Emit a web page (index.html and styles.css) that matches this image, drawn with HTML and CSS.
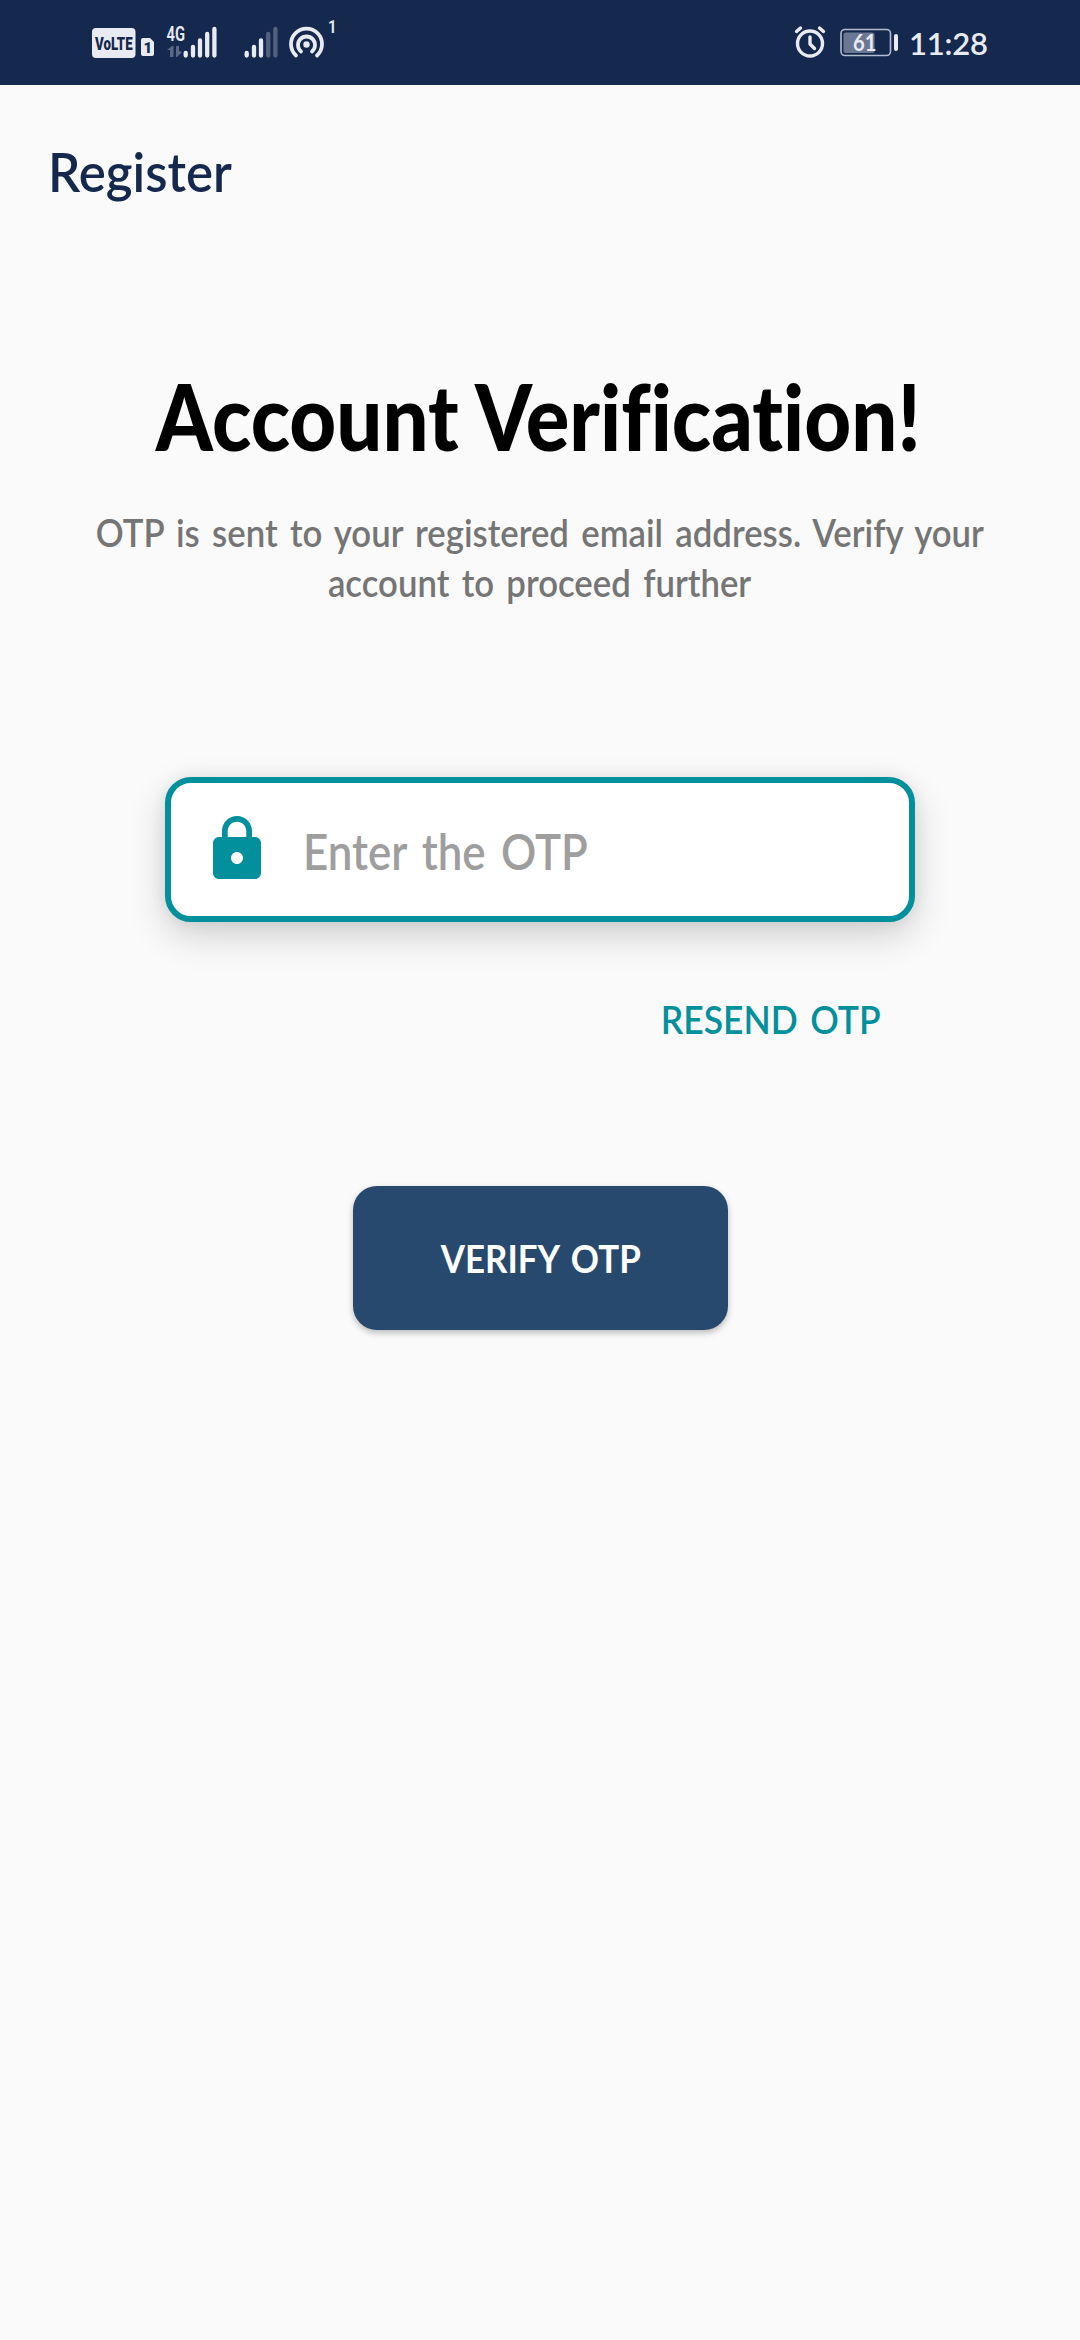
FILE: index.html
```html
<!DOCTYPE html>
<html lang="en">
<head>
<meta charset="utf-8">
<title>Register</title>
<link rel="stylesheet" href="styles.css">
</head>
<body>
<header class="status">
  <svg class="status-left" width="270" height="85" viewBox="80 0 270 85">
    <rect x="92" y="28" width="43.5" height="30" rx="4"/>
    <text class="volte" transform="translate(95 50) scale(.7 1)">VoLTE</text>
    <path d="M143 38h7l4 4v12a2 2 0 0 1-2 2h-9a2 2 0 0 1-2-2V40a2 2 0 0 1 2-2z"/>
    <text class="sim" x="143.5" y="52.500">1</text>
    <text class="net" transform="translate(166.500 41) scale(.74 1)">4G</text>
    <path class="dim" d="M167 50l5-4h1.500v11H170v-7zM176 46h3v5l3 1-5 5h-1z"/>
    <g class="bars"><path d="M185.700 53v2.500M193 47v8.500M200 40.500v15M207.200 34v21.500M214.400 29v26.500"/><path d="M246.700 53v2.500M254 47v8.500M261 40.500v15"/><path class="dim-bar" d="M268.200 34v21.500M275.400 29v26.500"/></g>
    <circle cx="306.500" cy="44.500" r="3.200"/>
    <path class="wave" d="M301 51.500a8.500 8.500 0 1 1 11 0M296 55.500a15.500 15.500 0 1 1 21 0"/>
    <text class="sup" transform="translate(328 33) scale(.8 1)">1</text>
  </svg>
  <svg class="status-right" width="240" height="85" viewBox="770 0 240 85">
    <circle class="line" cx="810" cy="43.500" r="12.500"/>
    <path class="line" d="M810 37v7l4.500 4.500M796.500 31.500l4-3.500M823.500 31.500l-4-3.500"/>
    <rect class="case" x="841" y="29.500" width="49.500" height="26" rx="4"/>
    <rect class="charge" x="843.500" y="32.500" width="31" height="20.500" rx="2"/>
    <rect x="894" y="34" width="4" height="17" rx="2"/>
    <text class="pct" transform="translate(853 51) scale(.88 1)">61</text>
    <text class="clock" x="909" y="55" textLength="79">11:28</text>
  </svg>
</header>
<main class="screen">
  <h1 class="bar-title"><span>Register</span></h1>
  <h2 class="headline"><span>Account Verification!</span></h2>
  <p class="hint"><span>OTP is sent to your registered email address. Verify your</span><br><span>account to proceed further</span></p>
  <label class="field">
    <svg class="lock" width="72" height="72" viewBox="0 0 24 24"><path d="M18 8h-1V6c0-2.760-2.240-5-5-5S7 3.240 7 6v2H6c-1.100 0-2 .9-2 2v10c0 1.100.9 2 2 2h12c1.100 0 2-.9 2-2V10c0-1.100-.9-2-2-2zm-6 9c-1.100 0-2-.9-2-2s.9-2 2-2 2 .9 2 2-.9 2-2 2zm3.100-9H8.900V6c0-1.710 1.390-3.100 3.100-3.100s3.100 1.390 3.100 3.100v2z"/></svg>
    <span class="placeholder">Enter the OTP</span>
  </label>
  <a class="resend"><span>RESEND OTP</span></a>
  <button class="verify"><span>VERIFY OTP</span></button>
</main>
</body>
</html>
```
FILE: styles.css
```css
* { box-sizing: border-box; }
body { margin: 0; min-height: 2340px; background: #fafafa; font-family: Lato, "Open Sans", sans-serif; font-weight: 600; font-variant-ligatures: none; }
.status { height: 85px; display: flex; justify-content: space-between; padding: 0 70px 0 80px; background: #15284e; }
.status svg { fill: #e9ebf3; font-family: Roboto, sans-serif; }
.volte { font-size: 19px; font-weight: 900; fill: #15284e; }
.sim { font-size: 15px; font-weight: 900; fill: #15284e; }
.net { font-size: 20px; font-weight: 600; }
.sup { font-size: 19px; }
.dim { fill: #5a688a; }
.bars { stroke: #e9ebf3; stroke-width: 4.3; stroke-linecap: round; }
.bars .dim-bar { stroke: #53617f; }
.wave { fill: none; stroke: #e9ebf3; stroke-width: 3.8; stroke-linecap: round; }
.line { fill: none; stroke: #e9ebf3; stroke-width: 3.4; stroke-linecap: round; stroke-linejoin: round; }
.case { fill: none; stroke: #b4bccf; stroke-width: 1.6; }
.charge { fill: #6b7894; }
.pct { font-family: Lato, sans-serif; font-size: 23px; font-weight: 700; }
.clock { font-family: Lato, sans-serif; font-size: 31px; font-weight: 600; }
.screen { display: flex; flex-direction: column; align-items: center; }
.screen span { display: inline-block; }
h1, h2, p { margin: 0; }
.bar-title { align-self: flex-start; margin: 55px 0 0 48px; height: 64px; line-height: 64px; font-size: 54px; font-weight: 600; color: #15284e; white-space: nowrap; }
.bar-title span { transform: scaleX(.945); transform-origin: left; }
.headline { margin-top: 157px; height: 110px; line-height: 110px; font-size: 91px; font-weight: 900; color: #000; white-space: nowrap; }
.headline span { transform: translateX(-2px) scaleX(.895); }
.hint { margin-top: 36px; line-height: 50px; font-size: 38px; color: #757575; text-align: center; white-space: nowrap; word-spacing: 4px; }
.hint span { transform: scaleX(.914); }
.field { margin-top: 170px; width: 750px; height: 145px; display: flex; align-items: center; padding-left: 30px; border: 6px solid #03909d; border-radius: 26px; background: #fff; box-shadow: 0 14px 36px rgba(0,0,0,.17), 0 0 16px rgba(0,0,0,.07); }
.lock { margin-bottom: 1px; fill: #03909d; }
.placeholder { margin: 2px 0 0 30px; font-size: 50px; color: #9e9e9e; white-space: nowrap; word-spacing: 5px; transform: scaleX(.877); transform-origin: left; }
.resend { margin: 72px 199px 0 0; align-self: flex-end; line-height: 50px; font-size: 39px; color: #03909d; word-spacing: 4px; }
.resend span { transform: scaleX(.91); transform-origin: right; }
.verify { margin-top: 142px; width: 375px; height: 144px; border: 0; border-radius: 24px; background: #27496d; color: #fff; font: 700 39px Lato, sans-serif; word-spacing: 4px; box-shadow: 0 3px 6px rgba(0,0,0,.25); }
.verify span { transform: translateX(1px) scaleX(.895); }
```
